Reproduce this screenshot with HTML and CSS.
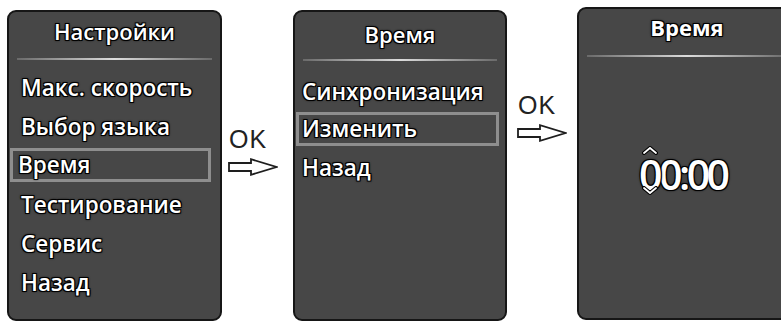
FILE: index.html
```html
<!DOCTYPE html>
<html lang="ru">
<head>
  <meta charset="UTF-8" />
  <meta name="viewport" content="width=device-width, initial-scale=1.0"/>
  <title>Время</title>
  <link rel="stylesheet" href="styles.css">
</head>
<body>
  <div class="flow">
    <section class="screen s1">
      <div class="title">Настройки</div>
      <div class="rule"></div>
      <ul class="menu">
        <li>Макс. скорость</li>
        <li>Выбор языка</li>
        <li class="sel">Время</li>
        <li>Тестирование</li>
        <li>Сервис</li>
        <li>Назад</li>
      </ul>
    </section>

    <div class="step st1">
      <span class="ok">OK</span>
      <svg class="arrow" width="50" height="18" viewBox="0 0 50 18">
        <path d="M1 5 H23 V1.2 L48.5 9 L23 16.8 V13 H1 Z" fill="#fff" stroke="#1e1e1e" stroke-width="1.8" stroke-linejoin="miter"/>
      </svg>
    </div>

    <section class="screen s2">
      <div class="title">Время</div>
      <div class="rule"></div>
      <ul class="menu">
        <li>Синхронизация</li>
        <li class="sel">Изменить</li>
        <li>Назад</li>
      </ul>
    </section>

    <div class="step st2">
      <span class="ok">OK</span>
      <svg class="arrow" width="50" height="18" viewBox="0 0 50 18">
        <path d="M1 5 H23 V1.2 L48.5 9 L23 16.8 V13 H1 Z" fill="#fff" stroke="#1e1e1e" stroke-width="1.8" stroke-linejoin="miter"/>
      </svg>
    </div>

    <section class="screen s3">
      <div class="title">Время</div>
      <div class="rule"></div>
      <div class="clock">
        <span class="digit">0<svg class="caret up" width="16" height="9" viewBox="0 0 16 9"><path d="M2 7 L8 2 L14 7" fill="none" stroke="#000" stroke-width="4" stroke-linecap="round"/><path d="M2 7 L8 2 L14 7" fill="none" stroke="#fff" stroke-width="1.8" stroke-linecap="round"/></svg><svg class="caret down" width="16" height="9" viewBox="0 0 16 9"><path d="M2 2 L8 7 L14 2" fill="none" stroke="#000" stroke-width="4" stroke-linecap="round"/><path d="M2 2 L8 7 L14 2" fill="none" stroke="#fff" stroke-width="1.8" stroke-linecap="round"/></svg></span>0:00
      </div>
    </section>
  </div>
</body>
</html>
```

FILE: styles.css
```css
body {
  margin: 0;
  background: #fff;
  font-family: "Open Sans", "Noto Sans", sans-serif;
  overflow: hidden;
  height: 322px;
}
.flow {
  display: flex;
  align-items: flex-start;
  padding-left: 7px;
}

.screen {
  box-sizing: border-box;
  width: 215px;
  height: 311px;
  margin-top: 10px;
  background: #474747;
  border: 2px solid #161616;
  border-radius: 9px;
  color: #fff;
  flex-shrink: 0;
  display: flex;
  flex-direction: column;
}
.s2 { width: 214px; }
.s3 { margin-top: 7px; height: 313px; width: 220px; }

.title, .menu li, .clock {
  text-shadow: -1px -1px 0 #000, 1px -1px 0 #000, -1px 1px 0 #000, 1px 1px 0 #000,
    0 0 3px #000, 0 0 2px #000;
}
.title {
  text-align: center;
  font-size: 22px;
  font-weight: 600;
  line-height: 25px;
  padding-top: 7px;
}
.s2 .title { padding-top: 10px; }
.s3 .title { font-weight: 700; padding-top: 6px; }

.rule {
  height: 2px;
  margin: 14px 8px 0;
  background: linear-gradient(to right, #6a6a6a, #dcdcdc 50%, #6a6a6a);
}
.s2 .rule { margin-top: 12px; }
.s3 .rule { margin-top: 15px; }

.menu {
  list-style: none;
  margin: 0;
  padding: 8px 0 0;
}
.s2 .menu { padding-top: 11px; }
.menu li {
  margin: 0 1px;
  padding: 3px 0 3px 9px;
  border: 2px solid transparent;
  font-size: 22.5px;
  font-weight: 600;
  line-height: 29px;
}
.menu li.sel {
  border: 3px solid #8e8e8e;
  padding: 0 0 0 5px;
  margin: 2px 9px 3px 1px;
  line-height: 28px;
}
.s2 .menu li { padding-left: 4px; }
.s2 .menu li.sel { padding-left: 3px; margin: 1px 6px 2px 1px; }

.step {
  width: 71px;
  flex-shrink: 0;
  box-sizing: border-box;
  padding-left: 6px;
  display: flex;
  flex-direction: column;
  align-items: flex-start;
}
.st1 { margin-top: 127px; }
.st2 { margin-top: 93px; width: 70px; padding-left: 10px; }
.ok {
  font-family: "Liberation Sans", Arial, sans-serif;
  font-size: 25px;
  line-height: 25px;
  letter-spacing: 1px;
  color: #222;
  padding-left: 1px;
}
.arrow { margin-top: 6px; display: block; }

.clock {
  margin-top: 95px;
  padding-left: 60px;
  font-size: 41px;
  font-weight: 600;
  line-height: 44px;
  letter-spacing: -3.5px;
}
.digit { position: relative; }
.caret {
  position: absolute;
  left: 3px;
}
.caret.up { top: 0; }
.caret.down { top: 40px; }
```
